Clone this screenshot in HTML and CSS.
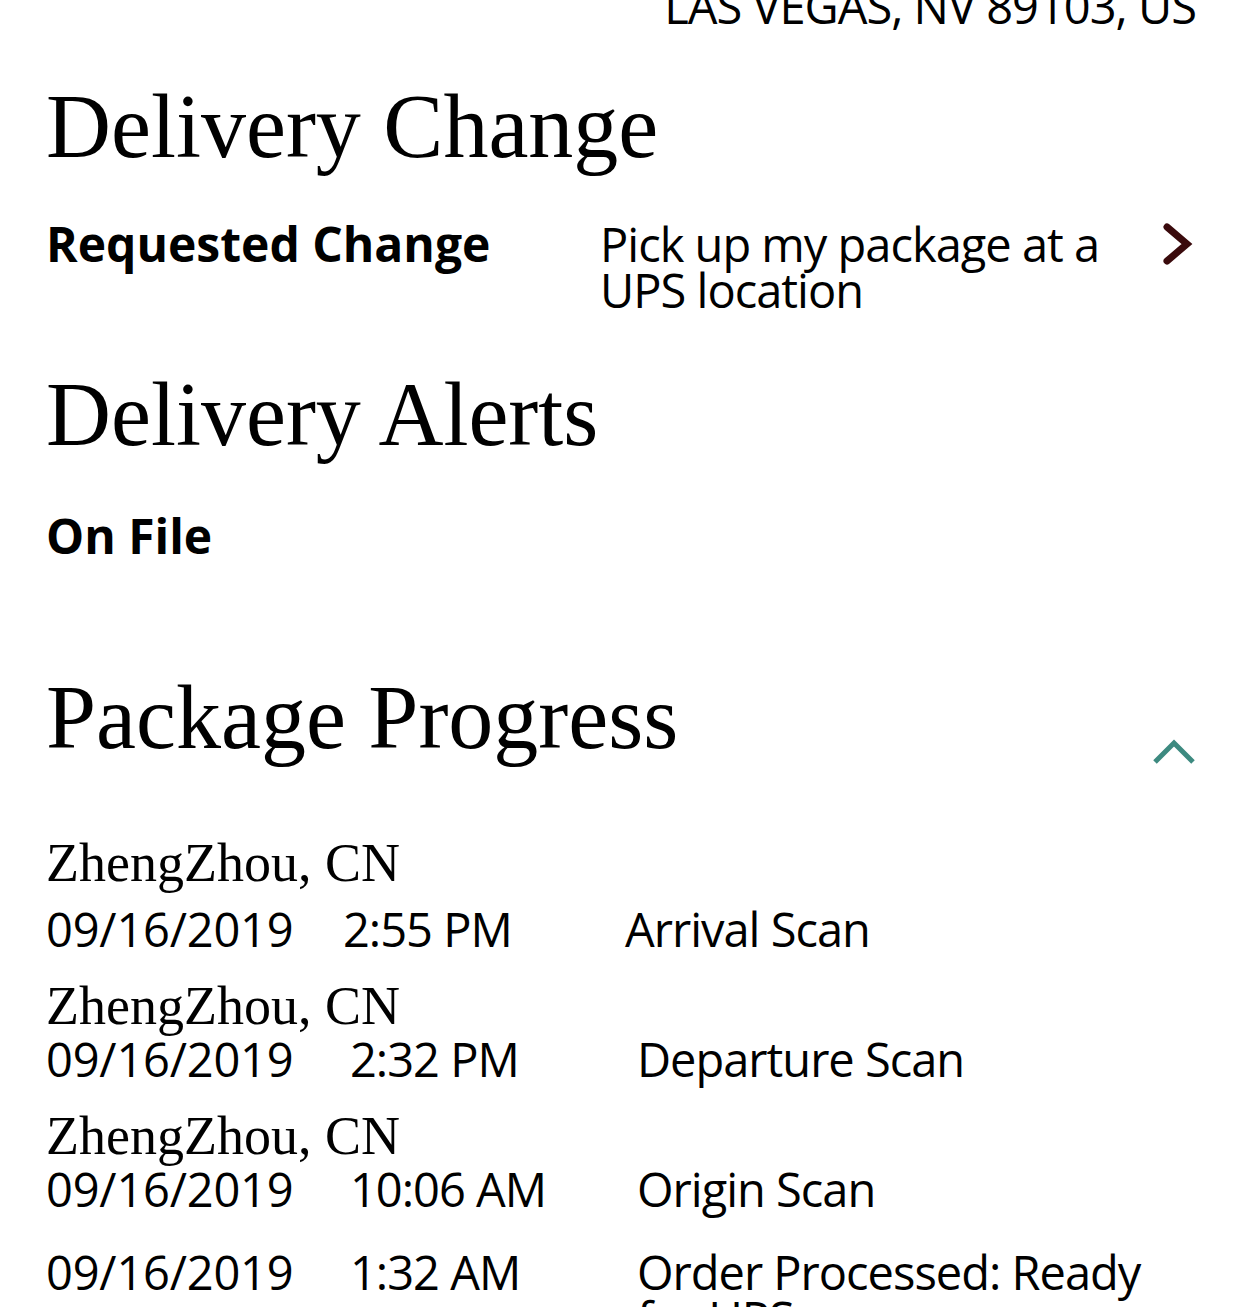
FILE: index.html
```html
<!DOCTYPE html>
<html lang="en">
<head>
    <meta charset="UTF-8">
    <meta name="viewport" content="width=device-width, initial-scale=1.0">
    <title>Tracking Details</title>
    <link rel="stylesheet" href="styles.css">
</head>
<body>

<div class="page">
    <div class="ship-to">LAS VEGAS, NV 89103, US</div>

    <section class="detail-block">
        <h2 class="block-title change-title">Delivery Change</h2>
        <div class="change-row">
            <div class="change-label">Requested Change</div>
            <div class="change-value">Pick up my package at a UPS location</div>
            <svg class="chevron-right" width="36" height="48" viewBox="0 0 36 48">
                <polyline points="7,8 27,25 7,42" fill="none" stroke="#3a0a0c" stroke-width="7" stroke-linecap="round" stroke-linejoin="miter"/>
            </svg>
        </div>
    </section>

    <section class="detail-block">
        <h2 class="block-title alerts-title">Delivery Alerts</h2>
        <div class="alert-status">On File</div>
    </section>

    <section class="detail-block">
        <div class="progress-head">
            <h2 class="block-title progress-title">Package Progress</h2>
            <svg class="chevron-up" width="46" height="30" viewBox="0 0 46 30">
                <polyline points="3,26 22,7 41,26" fill="none" stroke="#3d8a80" stroke-width="5"/>
            </svg>
        </div>

        <div class="activity activity-first">
            <div class="activity-place">ZhengZhou, CN</div>
            <div class="activity-row row-tight">
                <span class="activity-date">09/16/2019</span>
                <span class="activity-time">2:55 PM</span>
                <span class="activity-desc">Arrival Scan</span>
            </div>
        </div>
        <div class="activity">
            <div class="activity-place">ZhengZhou, CN</div>
            <div class="activity-row">
                <span class="activity-date">09/16/2019</span>
                <span class="activity-time">2:32 PM</span>
                <span class="activity-desc">Departure Scan</span>
            </div>
        </div>
        <div class="activity">
            <div class="activity-place">ZhengZhou, CN</div>
            <div class="activity-row">
                <span class="activity-date">09/16/2019</span>
                <span class="activity-time">10:06 AM</span>
                <span class="activity-desc">Origin Scan</span>
            </div>
        </div>
        <div class="activity activity-last">
            <div class="activity-row">
                <span class="activity-date">09/16/2019</span>
                <span class="activity-time">1:32 AM</span>
                <span class="activity-desc">Order Processed: Ready for UPS</span>
            </div>
        </div>
    </section>
</div>

</body>
</html>
```

FILE: styles.css
```css
body {
    margin: 0;
    background-color: #fff;
    color: #000;
    font-family: "Open Sans", "Noto Sans", sans-serif;
    font-size: 47px;
    letter-spacing: -1px;
    line-height: 46px;
    overflow: hidden;
}
.page {
    padding: 0 46px;
    height: 1307px;
    overflow: hidden;
}
.ship-to {
    margin-top: -17px;
    text-align: right;
}
.block-title {
    margin: 0;
    font-family: "Liberation Serif", "DejaVu Serif", serif;
    font-weight: normal;
    font-size: 90px;
    line-height: 90px;
    letter-spacing: 0;
}
.change-title {
    margin-top: 53px;
}
.change-row {
    display: flex;
    align-items: flex-start;
    margin-top: 49px;
}
.change-label {
    width: 554px;
    font-size: 48px;
    font-weight: bold;
    letter-spacing: 0;
}
.change-value {
    width: 520px;
}
.chevron-right {
    margin-left: auto;
    margin-top: -2px;
}
.alerts-title {
    margin-top: 57px;
}
.alert-status {
    margin-top: 53px;
    font-size: 48px;
    font-weight: bold;
    letter-spacing: 0;
}
.progress-head {
    display: flex;
    justify-content: space-between;
    align-items: flex-start;
    margin-top: 114px;
}
.chevron-up {
    margin-top: 63px;
    margin-right: -2px;
}
.activity {
    margin-top: 26px;
}
.activity-first {
    margin-top: 69px;
}
.activity-last {
    margin-top: 37px;
}
.activity-place {
    font-family: "Liberation Serif", "DejaVu Serif", serif;
    font-size: 54px;
    line-height: 56px;
    letter-spacing: 0;
}
.activity-row {
    display: grid;
    grid-template-columns: 304px 287px 530px;
    margin-top: 2px;
}
.activity-date {
    letter-spacing: -0.2px;
}
.activity-first .activity-row {
    margin-top: 15px;
}
.row-tight {
    grid-template-columns: 297px 282px 530px;
}
```
